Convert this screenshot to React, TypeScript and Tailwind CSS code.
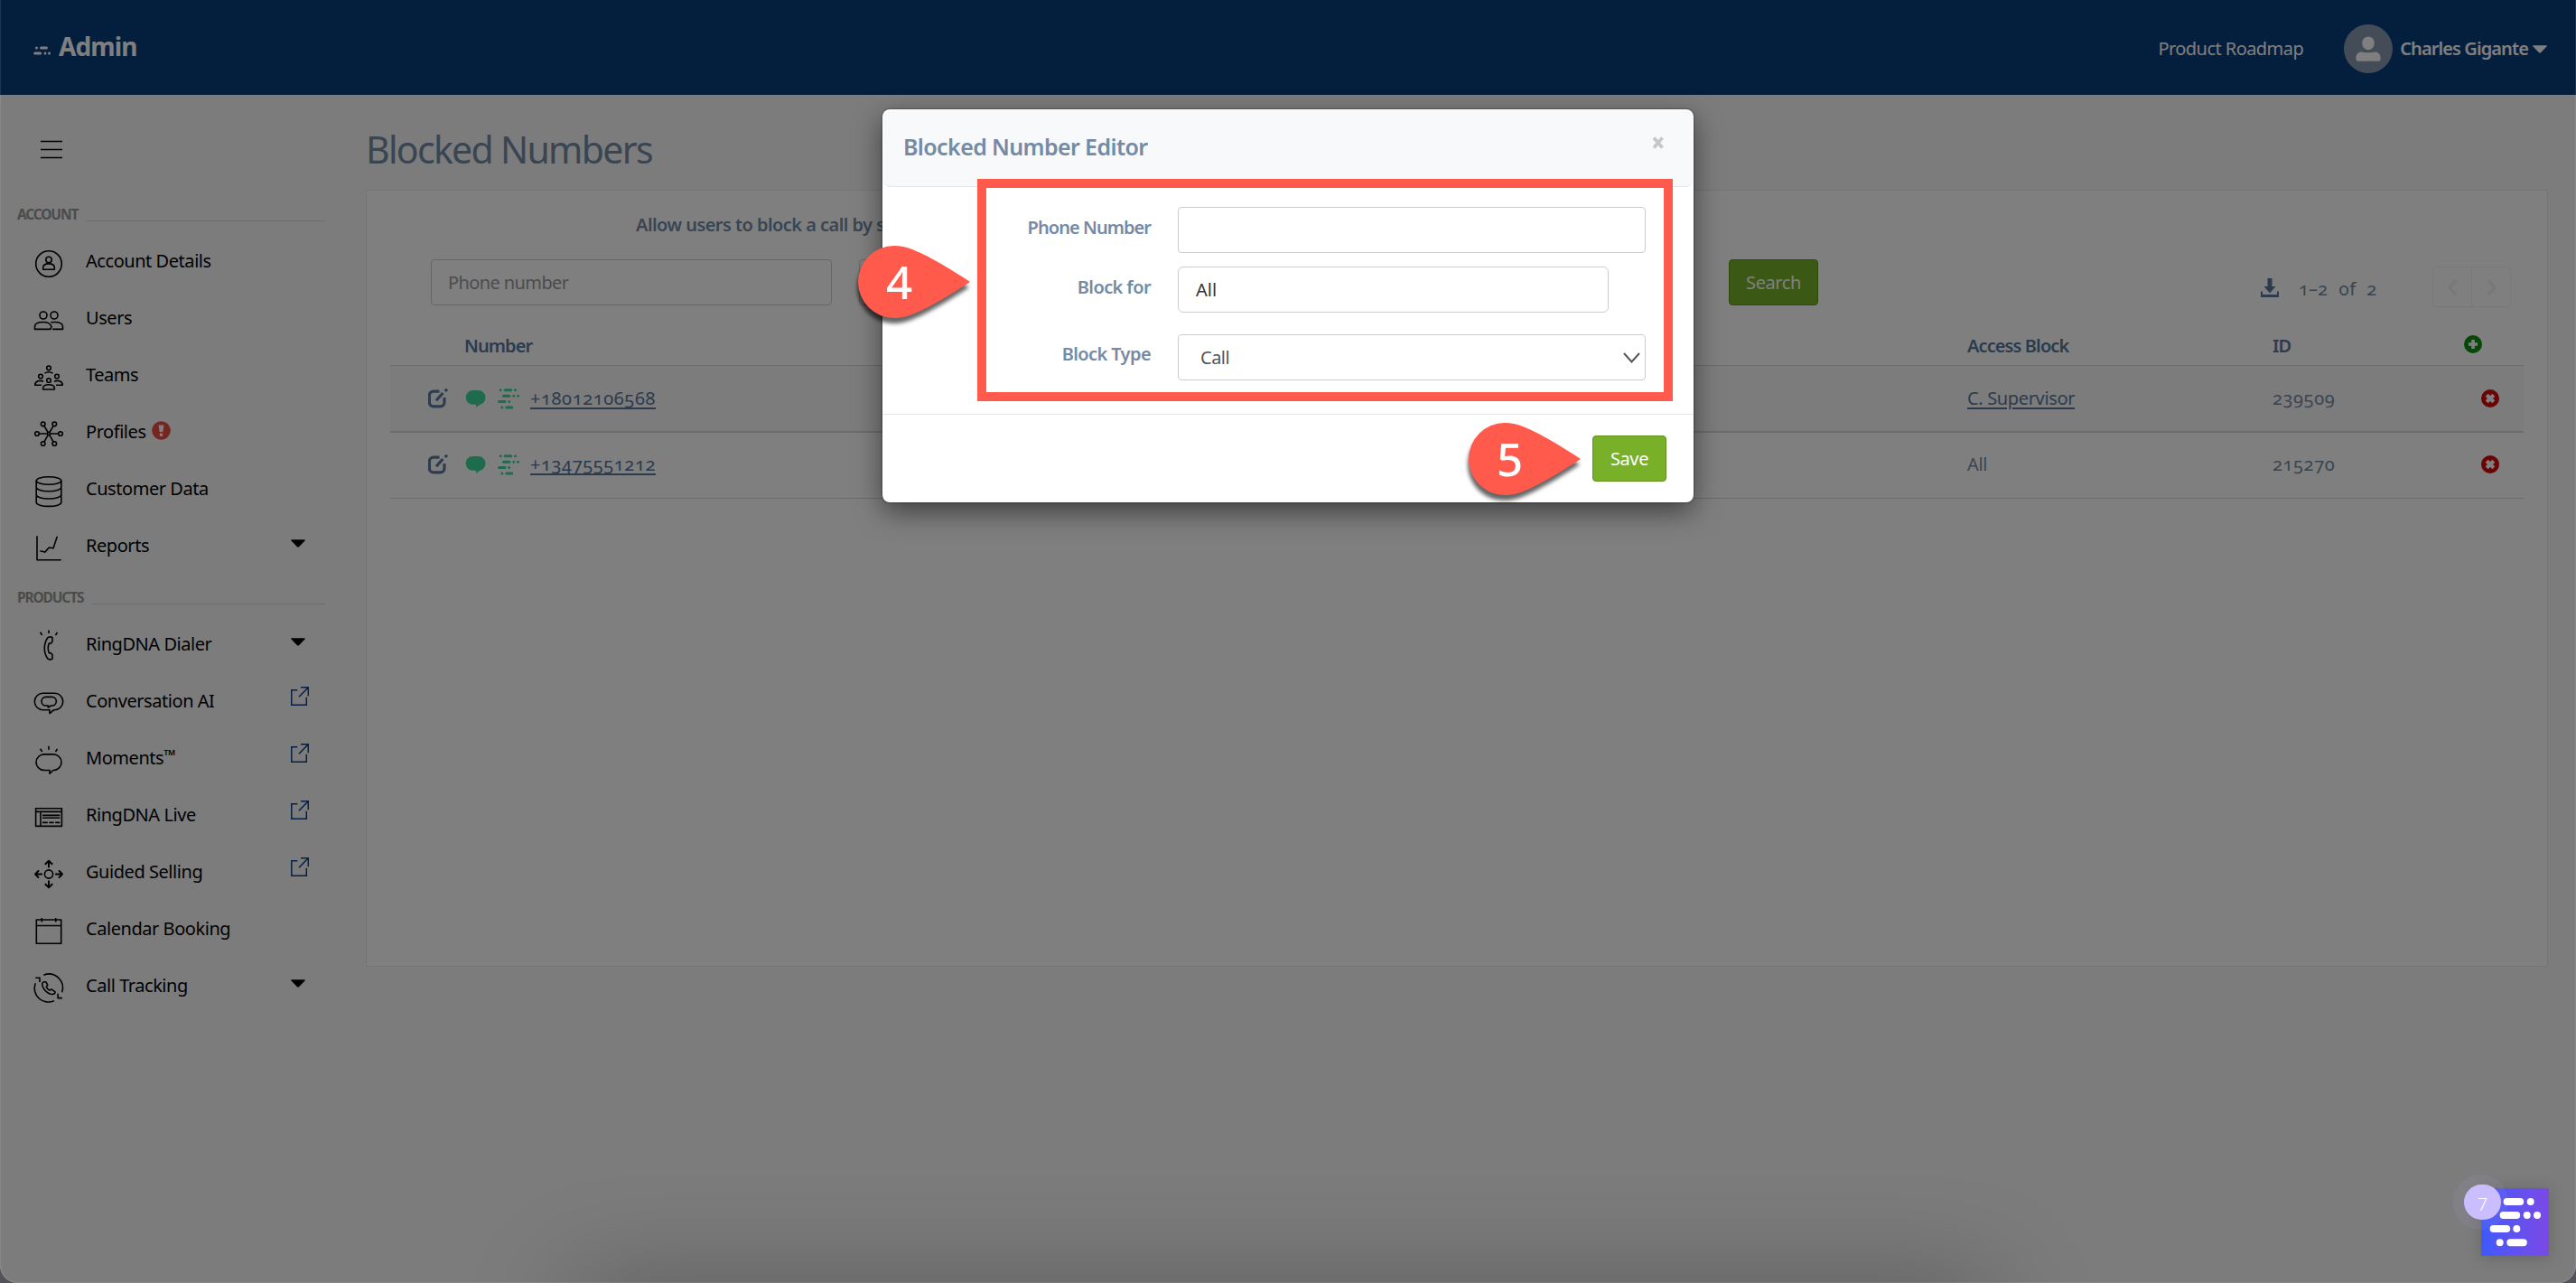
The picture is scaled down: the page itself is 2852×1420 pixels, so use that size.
import React from 'react';
import clsx from 'clsx';

type Trailing = 'caret' | 'external' | null;

interface NavItem {
  label: string;
  icon: React.ReactNode;
  trailing?: Trailing;
  alert?: boolean;
  tm?: boolean;
}

const Icon: React.FC<{ children: React.ReactNode }> = ({ children }) => (
  <svg
    className="mt-[6px] size-9 shrink-0 overflow-visible"
    viewBox="0 0 36 36"
    fill="none"
    stroke="#000"
    strokeWidth="1.6"
    strokeLinejoin="round"
  >
    {children}
  </svg>
);

const ACCOUNT_ITEMS: NavItem[] = [
  {
    label: 'Account Details',
    icon: (
      <Icon>
        <circle cx="18" cy="18" r="14.3" />
        <circle cx="18" cy="13.5" r="3.2" />
        <path d="M11.7 24.2v-1.9c0-3.2 2.8-4.4 6.3-4.4s6.3 1.2 6.3 4.4v1.9z" />
      </Icon>
    ),
  },
  {
    label: 'Users',
    icon: (
      <Icon>
        <circle cx="12" cy="12" r="4" />
        <circle cx="24" cy="12" r="4" />
        <path d="M2.5 24.5c0-3.5 4.5-5 9.5-5s8 1.8 9 5l-1.2 2.9H2.5z" />
        <path d="M20.3 19.8c1.1-.3 2.3-.3 3.7-.3 5 0 9.5 1.5 9.5 5v2.9H22" />
      </Icon>
    ),
  },
  {
    label: 'Teams',
    icon: (
      <Icon>
        <circle cx="18" cy="7.3" r="2.3" />
        <circle cx="9" cy="16.5" r="2.3" />
        <circle cx="27" cy="16.5" r="2.3" />
        <circle cx="18" cy="21" r="2.3" />
        <path d="M13.4 13.2c2.6-1.7 6.6-1.7 9.2 0M12 22.2c-3.5-1.6-9.3-.8-9.3 4.1H10M24 22.2c3.5-1.6 9.3-.8 9.3 4.1H26" />
        <path d="M11.6 31v-1c0-2.9 2.8-4.2 6.4-4.2s6.4 1.3 6.4 4.2v1z" />
      </Icon>
    ),
  },
  {
    label: 'Profiles',
    alert: true,
    icon: (
      <Icon>
        <circle cx="18" cy="17" r="1.6" />
        <circle cx="5" cy="17" r="2.3" />
        <circle cx="31" cy="17" r="2.3" />
        <circle cx="11.7" cy="6.3" r="2.3" />
        <circle cx="24.3" cy="6.3" r="2.3" />
        <circle cx="11.7" cy="28" r="2.3" />
        <circle cx="24.3" cy="28" r="2.3" />
        <path d="M7.3 17h9M19.7 17h9M12.9 8.3l4.2 7.2M23.1 8.3l-4.2 7.2M12.9 26l4.2-7.4M23.1 26l-4.2-7.4" />
      </Icon>
    ),
  },
  {
    label: 'Customer Data',
    icon: (
      <Icon>
        <ellipse cx="18" cy="6" rx="13.8" ry="4.3" />
        <path d="M4.2 6v24c0 2.5 6 4.4 13.8 4.4s13.8-1.9 13.8-4.4V6M4.2 13.3c0 2.5 6 4.4 13.8 4.4s13.8-1.9 13.8-4.4M4.2 21.6c0 2.5 6 4.4 13.8 4.4s13.8-1.9 13.8-4.4" />
      </Icon>
    ),
  },
  {
    label: 'Reports',
    trailing: 'caret',
    icon: (
      <Icon>
        <path d="M5 4.3v26.4h26.7M8.3 20.7l5.4 1.4 4.6-5.1 4.7.7 4.3-13" />
      </Icon>
    ),
  },
];

const PRODUCT_ITEMS: NavItem[] = [
  {
    label: 'RingDNA Dialer',
    trailing: 'caret',
    icon: (
      <Icon>
        <path d="M8.5 1.8l2.2 3.2M18-.5V3M27.5 1.8l-2 3.2" />
        <path d="M17 7.5l3.2-.8 1.8 1v4.4l-1.5 1.8-2.2.2c-1.2 3-1.2 7.6 0 10.6l2.2.2 1.5 1.8v4.4l-1.8 1-3.2-.8c-5-7-5-16.8 0-23.8z" />
      </Icon>
    ),
  },
  {
    label: 'Conversation AI',
    trailing: 'external',
    icon: (
      <Icon>
        <path d="M11.5 6.3h13a9.2 9.2 0 0 1 0 18.4h-.8L19 28.6v-3.9h-7.5a9.2 9.2 0 0 1 0-18.4z" />
        <path d="M14.8 10.4h6.7a4.8 4.8 0 0 1 0 9.6h-1L17.3 22v-2h-2.5a4.8 4.8 0 0 1 0-9.6z" />
      </Icon>
    ),
  },
  {
    label: 'Moments',
    tm: true,
    trailing: 'external',
    icon: (
      <Icon>
        <path d="M8.5 4.8l2.2 3.2M18 1.8v4M27.5 4.8l-2 3.2" />
        <path d="M12.8 10.9h10.4a8.8 8.8 0 0 1 0 17.6h-.3L19 32.3v-3.8h-6.2a8.8 8.8 0 0 1 0-17.6z" />
      </Icon>
    ),
  },
  {
    label: 'RingDNA Live',
    trailing: 'external',
    icon: (
      <Icon>
        <path d="M3.6 7.8h28.8v19.6H3.6zM3.6 11.4h28.8M9 11.4v16M11 15.4h19.3M11 18.3h19.3M11 23.4h5.8M18.4 23.4h5.2M25.2 23.4h5.1" />
      </Icon>
    ),
  },
  {
    label: 'Guided Selling',
    trailing: 'external',
    icon: (
      <Icon>
        <circle cx="18" cy="17.5" r="4.6" />
        <path
          strokeWidth="1.9"
          d="M18 10.3V3M13.8 6.8L18 2.8l4.2 4M18 24.5v7.6M13.8 28.3l4.2 4 4.2-4M10.8 17.5H3.4M7 13.3l-4 4.2 4 4.2M25.2 17.5h7.4M29 13.3l4 4.2-4 4.2"
        />
      </Icon>
    ),
  },
  {
    label: 'Calendar Booking',
    icon: (
      <Icon>
        <path d="M4.3 5h27.4v26.2H4.3zM4.3 11.5h27.4M10.3 3v4.4M25.7 3v4.4" />
      </Icon>
    ),
  },
  {
    label: 'Call Tracking',
    trailing: 'caret',
    icon: (
      <Icon>
        <path d="M12.3 3.2A15.3 15.3 0 0 1 32.6 22.3M24 31.6A15.3 15.3 0 0 1 3.2 12.3M3.3 6.2H8v4.9M32.9 28.6h-4.8v-4.9" />
        <path d="M12.6 10.7c-2.2.8-2.4 3-1 6 2 4 5 6.8 8.6 7.6 2.7.5 4.6-.3 5-2.4l-4.2-3-2 1.2c-1.8-.9-3-2.3-3.7-4l1.4-1.9-2-3.5z" />
      </Icon>
    ),
  },
];

const BLOCKED = [
  { number: '+18012106568', access: 'C. Supervisor', linked: true, id: '239509' },
  { number: '+13475551212', access: 'All', linked: false, id: '215270' },
];

const Caret = ({ className }: { className?: string }) => (
  <svg className={className} width="16" height="9" viewBox="0 0 16 9">
    <path d="M.8.3h14.4q1 .2.3 1.2L9 8.2q-1 .7-2 0L.5 1.5Q-.2.5.8.3z" fill="currentColor" />
  </svg>
);

const ExternalIcon = () => (
  <svg className="-mt-[10px] mr-[-4px]" width="20" height="21" viewBox="0 0 20 21" fill="none" stroke="#0b418c" strokeWidth="1.5">
    <path d="M7.3 3.7H.8v16.5h16.5v-8.4M11 .8h8.3v9.4M19.3.8L9 11.3" />
  </svg>
);

// four rows of pills and dots
const BrandDots = ({ className }: { className?: string }) => (
  <svg className={className} viewBox="0 0 75 75" fill="none" stroke="currentColor" strokeWidth="8" strokeLinecap="round">
    <path d="M28.6 15H43.2M54.7 15h.01M24.6 30H39.2M50.7 30h.01M62 30h.01M13.6 45H28.2M39.3 45h.01M20.7 60.3h.01M32.3 60.3H46.8" />
  </svg>
);

// table version of the mark, with an extra leading dot on the first row
const BrandDotsSmall = ({ className }: { className?: string }) => (
  <svg className={className} width="24" height="23" viewBox="0 0 24 23" fill="none" stroke="currentColor" strokeWidth="3" strokeLinecap="round">
    <path d="M3.2 1.7h.01M8.2 1.7h6.6M19.5 1.7h.01M6.5 8.2H13M17.8 8.2h.01M22.5 8.2h.01M1.5 14.6H8M12.7 14.6h.01M4.9 21h.01M9.8 21h6" />
  </svg>
);

const SidebarSection = ({ title, items, className }: { title: string; items: NavItem[]; className?: string }) => (
  <section className={className}>
    <div className="flex h-[20px] items-center pl-[19px] pr-[45px]">
      <h2 className="text-[15.5px] font-bold tracking-[-1.15px] text-[#969696]">{title}</h2>
      <div className="ml-[9px] mt-[15px] h-px flex-1 bg-[#d9d9de]" />
    </div>
    <ul className="mt-[10px]">
      {items.map((item) => (
        <li key={item.label} className="flex h-[63px] items-center pl-9 pr-[67px]">
          {item.icon}
          <span className="ml-[23px] whitespace-nowrap">
            {item.label}
            {item.tm && <span className="align-[4px] text-[17px] leading-none">™</span>}
          </span>
          {item.alert && (
            <svg className="-mt-[3px] ml-1.5" width="21" height="21" viewBox="0 0 21 21">
              <circle cx="10.5" cy="10.5" r="10.3" fill="#ef4a3f" />
              <path d="M7.6 4.5h5.8l-1 7.5H8.6zM8.8 13.5h3.4v3.3H8.8z" fill="#fff" />
            </svg>
          )}
          <span className="flex-1" />
          {item.trailing === 'caret' && <Caret className="-mt-[4px] text-black" />}
          {item.trailing === 'external' && <ExternalIcon />}
        </li>
      ))}
    </ul>
  </section>
);

const RoundIcon = ({ kind, className }: { kind: 'add' | 'remove'; className?: string }) => (
  <svg className={className} width="20" height="20" viewBox="0 0 20 20">
    <circle cx="10" cy="10" r="10" fill={kind === 'add' ? '#0f8f0f' : '#d60b0b'} />
    {kind === 'add' ? (
      <path d="M10 5v10M5 10h10" stroke="#fff" strokeWidth="3.6" />
    ) : (
      <path d="M6.2 6.2l7.6 7.6M13.8 6.2l-7.6 7.6" stroke="#fff" strokeWidth="4.2" />
    )}
  </svg>
);

const EditIcon = () => (
  <svg width="22" height="22" viewBox="0 0 22 22" fill="none" stroke="#5b789c" strokeWidth="3.2">
    <path d="M12.4 3.1H6a4.6 4.6 0 0 0-4.6 4.6v7.6A4.6 4.6 0 0 0 6 19.9h7.4a4.6 4.6 0 0 0 4.6-4.6V10" />
    <path d="M9 13.3l7.3-8.3M18.8 3L21 .7" />
  </svg>
);

const Marker = ({ n, className }: { n: string; className: string }) => (
  <div className={clsx('absolute h-20 w-[124px]', className)}>
    <svg
      className="absolute inset-0 overflow-visible drop-shadow-[-1px_6px_2px_rgba(0,0,0,0.6)]"
      width="124"
      height="80"
      viewBox="0 0 124 80"
    >
      <path d="M124 40C104 27 82 13 60 4Q50 0 40 0a40 40 0 0 0 0 80Q50 80 60 76C82 67 104 53 124 40z" fill="#ff5a4c" />
    </svg>
    <span className="relative flex h-[78px] w-[91px] items-center justify-center text-[51px] font-medium text-white">{n}</span>
  </div>
);

const Header = () => (
  <header className="flex h-[105px] items-center bg-[#083c7c] pl-[37px] pr-8 text-white">
    <svg className="mt-[7px]" width="19" height="10" viewBox="0 0 19 10" stroke="#fff" strokeWidth="3" strokeLinecap="round">
      <path d="M3.5 2h.01M8.5 2h6M1.7 8h6M13 8h.01M17.5 8h.01" />
    </svg>
    <span className="-mt-1 ml-[9px] text-[28px] font-bold leading-none tracking-[-0.9px]">Admin</span>
    <div className="flex-1" />
    <span className="mt-[2px] tracking-[-0.55px]">Product Roadmap</span>
    <span className="ml-[45px] mt-[3px] flex size-[54px] items-center justify-center rounded-full bg-[#8899b1]">
      <svg className="-mt-px" width="28" height="28" viewBox="0 0 28 28" fill="#fff">
        <ellipse cx="14" cy="7.8" rx="6.8" ry="7.4" />
        <path d="M5.5 17.5C3 18 .5 20.5.5 23v2.5q0 2.2 2 2.2h23q2 0 2-2.2V23c0-2.5-2.5-5-5-5.5-2-.5-3 .8-8.5.8s-6.5-1.3-8.5-.8z" />
      </svg>
    </span>
    <span className="ml-[8px] mt-[2px] font-semibold tracking-[-0.9px]">Charles Gigante</span>
    <Caret className="ml-[5px] mt-[3px]" />
  </header>
);

const BlockedNumbersPanel = () => (
  <section className="mt-[8px] h-[860px] w-[2416px] border border-[#ebebeb] bg-white px-[26px] pt-[25px]">
    <div className="pl-[272px] font-semibold leading-[26px] tracking-[-0.55px]">
      Allow users to block a call by selecting a number
    </div>
    <div className="mt-[25px] flex h-[51px] pl-[45px]">
      <div className="flex w-[444px] items-center rounded border border-[#ccc] pl-[18px] tracking-[-0.6px] text-[#999]">
        Phone number
      </div>
      <div className="ml-[30px] w-[444px] rounded border border-[#ccc]" />
      <div className="ml-[519px] flex w-[99px] items-center justify-center rounded border border-[#5f9119] bg-[#78b02a] tracking-[-0.4px] text-white">
        Search
      </div>
      <div className="ml-[490px] flex items-start">
        <svg className="mt-[21px]" width="20" height="21" viewBox="0 0 20 21" fill="#58769a">
          <path d="M7.5 0h5v9h4L10 16.5 3.5 9h4zM0 14.5h2V18h16v-3.5h2V21H0z" />
        </svg>
        <span className="ml-[22px] mt-[18px] w-[148px] whitespace-nowrap oldstyle-nums leading-[30px] [word-spacing:7px]">1–2 of 2</span>
        <div className="mt-2 flex h-[45px] w-[87px] divide-x divide-[#f0f0f0] rounded border border-[#f0f0f0] text-[#f0f0f0]">
          {['M13 4L6 12l7 8', 'M6 4l7 8-7 8'].map((d) => (
            <div key={d} className="flex flex-1 items-center justify-center">
              <svg width="18" height="24" viewBox="0 0 18 24" fill="none" stroke="currentColor" strokeWidth="3.5">
                <path d={d} />
              </svg>
            </div>
          ))}
        </div>
      </div>
    </div>

    <div className="flex h-[67px] items-start border-b border-[#d9d9d9] pt-[30px] font-semibold leading-[30px] tracking-[-0.9px] text-[#58769a]">
      <span className="w-[1746px] pl-[82px]">Number</span>
      <span className="w-[338px]">Access Block</span>
      <span className="w-[212px]">ID</span>
      <RoundIcon kind="add" className="mt-[3px]" />
    </div>
    {BLOCKED.map((row, i) => (
      <div
        key={row.id}
        className={clsx(
          'flex items-center border-[#d9d9d9]',
          i === 0 ? 'h-[74px] border-b-2 bg-[#f9f9f9]' : 'h-[73px] border-b pb-[2px]'
        )}
      >
        <div className="flex w-[1746px] items-center pl-[42px]">
          <EditIcon />
          <svg className="ml-[19px]" width="24" height="19" viewBox="0 0 24 19" fill="#3ed69c">
            <path d="M8.5 0h7a8 8 0 0 1 1 15.7L12 18.8v-3.1H8.5a7.85 7.85 0 0 1 0-15.7z" />
          </svg>
          <BrandDotsSmall className="ml-3 text-[#3ed69c]" />
          <span className="ml-3 oldstyle-nums tracking-[0.6px] text-[#58769a] underline decoration-2 underline-offset-[3px]">
            {row.number}
          </span>
        </div>
        <span
          className={clsx(
            'w-[338px] tracking-[-0.35px]',
            row.linked && 'text-[#58769a] underline decoration-2 underline-offset-[3px]'
          )}
        >
          {row.access}
        </span>
        <span className="w-[231px] oldstyle-nums tracking-[0.6px]">{row.id}</span>
        <RoundIcon kind="remove" />
      </div>
    ))}
  </section>
);

interface FieldProps {
  label: string;
  children: React.ReactNode;
  className?: string;
  labelClass?: string;
}

const Field = ({ label, children, className, labelClass = 'pb-[5px] tracking-[-0.95px]' }: FieldProps) => (
  <div className={clsx('flex h-[51px] items-center', className)}>
    <label className={clsx('mr-[30px] w-[296px] text-right font-semibold', labelClass)}>{label}</label>
    {children}
  </div>
);

const BlockedNumberEditor = () => (
  <div className="relative h-[435px] w-[898px] rounded-lg bg-white p-px shadow-[0_10px_30px_rgba(0,0,0,0.5),0_0_2px_rgba(0,0,0,0.8)]">
    <div className="flex h-[85px] items-center justify-between rounded-lg border-b border-[#e1e5e9] bg-[#f7f9fa] pl-[22px] pr-[30px]">
      <h3 className="-mt-[4px] text-[25px] font-semibold tracking-[-0.62px]">Blocked Number Editor</h3>
      <svg className="-mt-3" width="16" height="14" viewBox="0 0 16 14" stroke="#c5c7c8" strokeWidth="3.6">
        <path d="M3 1.5l9.5 11M12.5 1.5L3 12.5" />
      </svg>
    </div>
    <div className="h-[252px] border-b border-[#e3e5e7] pt-[22px]">
      <Field label="Phone Number">
        <div className="h-full w-[518px] rounded border border-[#ccc]" />
      </Field>
      <Field label="Block for" className="mt-[15px]" labelClass="pb-[5px] tracking-[-0.6px]">
        <div className="flex h-full w-[477px] items-center rounded-md border border-[#ccc] pl-[19px] text-[#333]">All</div>
      </Field>
      <Field label="Block Type" className="mt-[24px]" labelClass="pb-[8px] tracking-[-0.6px]">
        <div className="flex h-full w-[518px] items-center justify-between rounded border border-[#ccc] pl-[24px] pr-[5px] tracking-[-0.5px] text-[#555]">
          Call
          <svg width="19" height="12" viewBox="0 0 19 12" fill="none" stroke="#555" strokeWidth="2">
            <path d="M1 1l8.5 9.5L18 1" />
          </svg>
        </div>
      </Field>
    </div>
    <div className="flex justify-end pr-[29px] pt-[23px]">
      <button className="h-[51px] w-[82px] rounded border border-[#5f9119] bg-[#78b02a] tracking-[-0.4px] text-white">Save</button>
    </div>

    <div className="absolute left-[105px] top-[77px] h-[246px] w-[770px] border-[10px] border-[#ff5a4c]" />
    <Marker n="4" className="left-[-27px] top-[151px]" />
    <Marker n="5" className="left-[649px] top-[347px]" />
  </div>
);

export default function App() {
  return (
    <div className="relative h-[1420px] w-[2852px] overflow-hidden bg-[#55535a] font-['Noto_Sans',sans-serif] text-[20px] leading-[30px] text-[#748aa5]">
      <div className="relative h-full overflow-hidden rounded-b-[20px] bg-[#f8f8f8]">
        <Header />
        <div className="flex">
          <nav className="w-[405px] tracking-[-0.45px] text-black">
            <svg className="ml-[45px] mt-[50px]" width="24" height="21" viewBox="0 0 24 21" stroke="#000" strokeWidth="1.6">
              <path d="M0 1.5h24M0 10.5h24M0 19.5h24" />
            </svg>
            <SidebarSection title="ACCOUNT" items={ACCOUNT_ITEMS} className="mt-[51px]" />
            <SidebarSection title="PRODUCTS" items={PRODUCT_ITEMS} className="mt-[16px]" />
          </nav>
          <main className="pt-[26px]">
            <h1 className="mb-[11px] text-[41px] leading-[68px] tracking-[-1.7px]">Blocked Numbers</h1>
            <BlockedNumbersPanel />
          </main>
        </div>
        <div className="absolute inset-0 bg-black/50" />
        <div className="absolute left-[635px] top-[1425px] h-20 w-[1570px] shadow-[0_0_120px_rgba(0,0,0,0.3)]" />
        <div className="absolute inset-0 rounded-b-[20px] border border-t-0 border-white/10" />
      </div>

      <div className="absolute inset-x-0 top-[121px] flex justify-center">
        <BlockedNumberEditor />
      </div>

      <div className="absolute bottom-[30px] right-[30px] size-[75px] bg-gradient-to-r from-[#3c59fa] to-[#7a49e6] shadow-[0_2px_16px_rgba(0,0,0,0.18)]">
        <div className="absolute left-[-31px] top-[-15px] size-[61px] rounded-full bg-[#b0a4e0]/10" />
        <BrandDots className="relative size-full text-white" />
        <span className="absolute left-[-19px] top-[-4px] flex h-[39px] w-[41px] items-center justify-center rounded-full bg-[#cbbeff] pt-1 font-light text-white">
          7
        </span>
      </div>
    </div>
  );
}
